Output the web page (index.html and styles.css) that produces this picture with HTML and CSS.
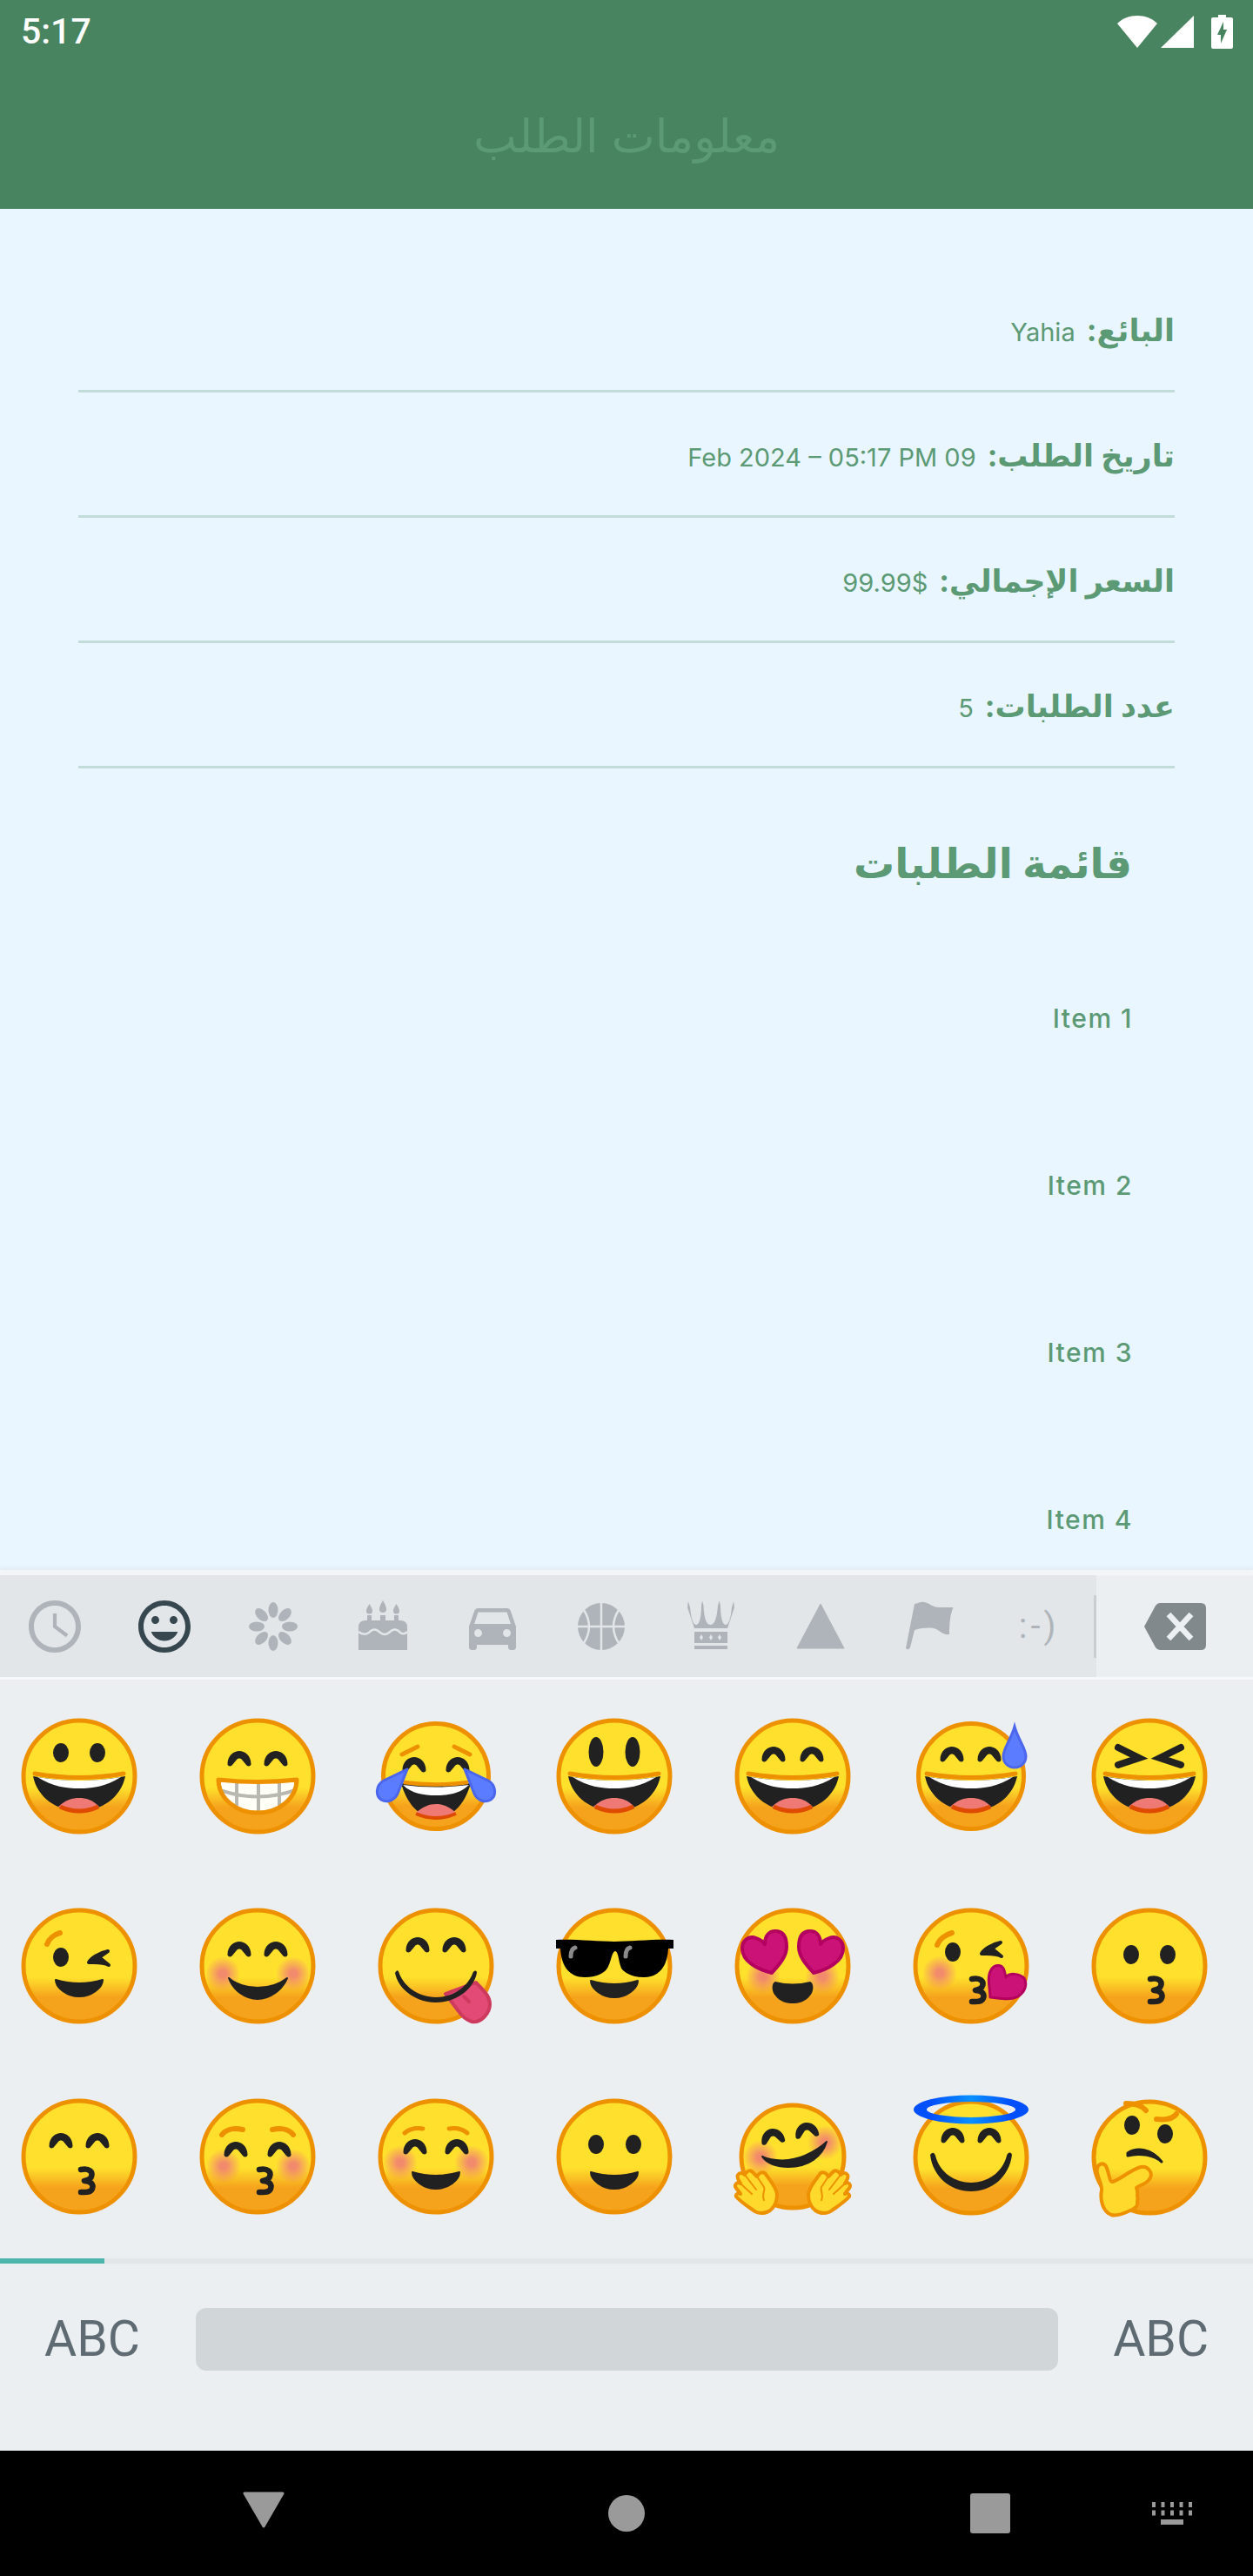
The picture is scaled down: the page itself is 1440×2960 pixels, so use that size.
FILE: index.html
```html
<!DOCTYPE html>
<html lang="ar">
<head>
    <meta charset="UTF-8">
    <meta name="viewport" content="width=device-width, initial-scale=1.0">
    <title>معلومات الطلب</title>
    <link rel="stylesheet" href="styles.css">
</head>
<body>
    <!-- shared emoji parts -->
    <svg class="defs" aria-hidden="true">
        <defs>
            <linearGradient id="skin" x1="0" y1="0" x2="0" y2="1">
                <stop offset="0.6" stop-color="#ffe12d"/>
                <stop offset="0.78" stop-color="#f5a31c"/>
            </linearGradient>
            <linearGradient id="halo" x1="0" y1="0" x2="1" y2="0">
                <stop offset="0.15" stop-color="#0050ff"/>
                <stop offset="0.5" stop-color="#0a90ff"/>
                <stop offset="0.85" stop-color="#0050ff"/>
            </linearGradient>
            <radialGradient id="blush">
                <stop offset="0.2" stop-color="#f28a6c"/>
                <stop offset="1" stop-color="#f28a6c" stop-opacity="0"/>
            </radialGradient>
            <clipPath id="teeth-clip">
                <path d="M-45 4Q0 9 45 4C45 25 25 42 0 42C-25 42-45 25-45 4Z"/>
            </clipPath>
            <circle id="face" r="64" fill="url(#skin)" stroke="#ee9100" stroke-width="5"/>
            <circle id="face-s" r="60.5" fill="url(#skin)" stroke="#ee9100" stroke-width="5"/>
            <ellipse id="eye" rx="9" ry="11" fill="#212121"/>
            <path id="eye-arc" fill="#212121" d="M-13.5 6C-13.5-4-6-9 0-9C6-9 13.5-4 13.5 6C13.5 9 9 9 8 7L3 1C1.5-1-1.5-1-3 1L-8 7C-9 9-13.5 9-13.5 6Z"/>
            <circle id="cheek" r="20" fill="url(#blush)"/>
            <g id="laugh">
                <path d="M-53 0Q0 10 53 0C48 25 25 40 0 40C-25 40-48 25-53 0Z" fill="#212121"/>
                <path d="M-48 1Q0 9 48 1C30 12 15 14 0 14C-15 14-30 12-48 1Z" fill="#fff"/>
                <path d="M-24 35C-15 27-8 25 0 25C8 25 15 27 23 35C14 40 7 41 0 41C-7 41-14 40-24 35Z" fill="#ef7a75"/>
                <path d="M-22 35Q0 45 22 35" fill="none" stroke="#dd4a00" stroke-width="5"/>
                <path d="M-51-3Q0 6 51-3" fill="none" stroke="#ee9100" stroke-width="5" stroke-linecap="round"/>
            </g>
            <path id="smile" fill="#212121" stroke="#212121" stroke-width="2" stroke-linejoin="round" d="M-27 16Q0 24 27 16C27 25 14 35 0 35C-14 35-27 25-27 16Z"/>
            <path id="kiss" fill="none" stroke="#212121" stroke-width="6.5" stroke-linecap="round" stroke-linejoin="round" d="M-2 15C8 13 12 18 10 23C9 27 4 27 2 28C9 28 13 32 11 37C9 42 3 41-2 41"/>
            <path id="wink" fill="#212121" stroke="#212121" stroke-width="4" stroke-linejoin="round" d="M33-17C22-15 13-8 11-4C17-4 27-5 34-1L23-10Z"/>
            <path id="heart-l" fill="#cb1277" stroke="#b3005f" stroke-width="4" stroke-linejoin="round" d="M-24 8C-40 4-58-5-58-20C-58-30-50-35-42-32C-37-30-33-27-32-25C-32-35-27-40-20-40C-11-40-7-33-7-22C-7-10-17 0-24 8Z"/>
            <path id="tear" fill="#5c7cff" stroke="#4a66ee" stroke-width="3" stroke-linejoin="round" d="M-33-8L-60 5C-69 10-70 22-63 27C-56 31-48 28-44 20Z"/>
            <g id="hand">
                <path fill="#ffd92c" stroke="#ee9100" stroke-width="4" stroke-linejoin="round" d="M-32 19C-27 26-18 36-18 44C-18 52-21 58-26 62C-32 66-40 66-45 62C-52 57-60 52-65 46C-66 43-62 41-60 43C-62 39-67 36-66 33C-65 30-62 29-60 31C-62 27-65 24-63 21C-61 18-57 19-55 21C-54 18-50 15-47 17C-45 19-43 21-41 23C-39 19-35 17-32 19Z"/>
                <path fill="none" stroke="#ee9100" stroke-width="2" stroke-linecap="round" d="M-55 21L-42 38M-60 31L-47 43M-41 23L-33 35C-31 38-36 44-33 50"/>
            </g>
        </defs>
    </svg>

    <div class="screen">
        <header class="app-head">
            <div class="status-bar">
                <span class="clock">5:17</span>
                <div class="status-icons">
                    <svg width="46" height="37" viewBox="0 0 46 37"><path fill="#fff" d="M23 37L0 9C6 3 14 0 23 0S40 3 46 9Z"/></svg>
                    <svg width="38" height="37" viewBox="0 0 38 37"><path fill="#fff" d="M38 0V37H0Z"/></svg>
                    <svg class="battery" width="25" height="39" viewBox="0 0 25 39"><path fill="#fff" d="M8 0H17V3H23Q25 3 25 5V37Q25 39 23 39H2Q0 39 0 37V5Q0 3 2 3H8Z"/><path fill="#47845f" d="M14 8L7 23H11V33L18 17H14Z"/></svg>
                </div>
            </div>
            <h1 class="app-title">معلومات الطلب</h1>
        </header>

        <main class="order" dir="rtl">
            <div class="info-row"><b>البائع:</b> Yahia</div>
            <div class="info-row"><b>تاريخ الطلب:</b> 09 Feb 2024 – 05:17 PM</div>
            <div class="info-row"><b>السعر الإجمالي:</b> 99.99$</div>
            <div class="info-row"><b>عدد الطلبات:</b> 5</div>
            <h2 class="list-title">قائمة الطلبات</h2>
            <div class="item">Item 1</div>
            <div class="item">Item 2</div>
            <div class="item">Item 3</div>
            <div class="item">Item 4</div>
        </main>

        <section class="keyboard">
            <div class="tabs">
                <div class="tab-list">
                    <div class="tab"><svg viewBox="0 0 24 24"><path d="M11.99 2C6.47 2 2 6.48 2 12s4.47 10 9.99 10C17.52 22 22 17.52 22 12S17.52 2 11.99 2zM12 20c-4.42 0-8-3.58-8-8s3.58-8 8-8 8 3.58 8 8-3.58 8-8 8z"/><path d="M12 7v5l4.7 3.5" fill="none" stroke="#aeb4b9" stroke-width="1.4"/></svg></div>
                    <div class="tab tab-on"><svg viewBox="0 0 24 24"><path d="M11.99 2C6.47 2 2 6.48 2 12s4.47 10 9.99 10C17.52 22 22 17.52 22 12S17.52 2 11.99 2zM12 20c-4.42 0-8-3.58-8-8s3.58-8 8-8 8 3.58 8 8-3.58 8-8 8zm3.5-9c.83 0 1.5-.67 1.5-1.5S16.33 8 15.5 8 14 8.67 14 9.5s.67 1.5 1.5 1.5zm-7 0c.83 0 1.5-.67 1.5-1.5S9.33 8 8.5 8 7 8.67 7 9.5 7.67 11 8.5 11zm3.5 6.5c2.33 0 4.31-1.46 5.11-3.5H6.89c.8 2.04 2.78 3.5 5.11 3.5z"/></svg></div>
                    <div class="tab"><svg viewBox="0 0 72 72">
                        <ellipse cx="36" cy="17" rx="5.5" ry="9"/>
                        <ellipse cx="36" cy="17" rx="5.5" ry="9" transform="rotate(45 36 36)"/>
                        <ellipse cx="36" cy="17" rx="5.5" ry="9" transform="rotate(90 36 36)"/>
                        <ellipse cx="36" cy="17" rx="5.5" ry="9" transform="rotate(135 36 36)"/>
                        <ellipse cx="36" cy="17" rx="5.5" ry="9" transform="rotate(180 36 36)"/>
                        <ellipse cx="36" cy="17" rx="5.5" ry="9" transform="rotate(225 36 36)"/>
                        <ellipse cx="36" cy="17" rx="5.5" ry="9" transform="rotate(270 36 36)"/>
                        <ellipse cx="36" cy="17" rx="5.5" ry="9" transform="rotate(315 36 36)"/>
                    </svg></div>
                    <div class="tab"><svg viewBox="0 0 72 72">
                        <path d="M20.5 10C23 14 24 16 24 18A3.5 3.5 0 0 1 17 18C17 16 18 14 20.5 10ZM36 6C39 11 40 14 40 16A4 4 0 0 1 32 16C32 14 33 11 36 6ZM51.500 10C54 14 55 16 55 18A3.500 3.500 0 0 1 48 18C48 16 49 14 51.500 10Z"/>
                        <path d="M18 23H23V29H33V23H39V29H49V23H54V29H56Q64 29 64 37V63H8V37Q8 29 16 29H18Z"/>
                        <path d="M8 42Q14 47 20 43Q26 36 33 43Q38 47 43 43Q50 36 56 43Q60 46 64 42" fill="none" stroke="#e2e6e9" stroke-width="2.500"/>
                    </svg></div>
                    <div class="tab"><svg viewBox="0 0 24 24"><path d="M18.92 6.010C18.72 5.420 18.160 5 17.500 5h-11c-.66 0-1.210.42-1.420 1.010L3 12v8c0 .55.45 1 1 1h1c.55 0 1-.45 1-1v-1h12v1c0 .55.45 1 1 1h1c.55 0 1-.45 1-1v-8l-2.080-5.990zM6.500 16c-.83 0-1.500-.67-1.500-1.500S5.670 13 6.500 13s1.500.67 1.500 1.500S7.330 16 6.500 16zm11 0c-.83 0-1.500-.67-1.500-1.500s.67-1.500 1.500-1.500 1.500.67 1.500 1.500-.67 1.500-1.500 1.500zM5 11l1.500-4.500h11L19 11H5z"/></svg></div>
                    <div class="tab"><svg viewBox="0 0 72 72">
                        <circle cx="36" cy="36" r="27"/>
                        <path d="M36 9V63M9 36H63M16 17Q28 36 16 55M56 17Q44 36 56 55" fill="none" stroke="#e2e6e9" stroke-width="2.500"/>
                    </svg></div>
                    <div class="tab"><svg viewBox="0 0 72 72">
                        <path d="M9 14L10 7L12 14C13 24 15 34 19 34C23 34 25 24 25 12L26 6L27.500 12C28 24 30 34 35.500 34C41 34 43 24 44 12L45.500 6L47 12C47 24 49 34 53 34C57 34 59 24 60 14L62 7L63 14L55 38H17Z"/>
                        <path fill-rule="evenodd" d="M17 42H55V55H17ZM25 45L23 48.500L25 52L27 48.500ZM36 45L34 48.500L36 52L38 48.500ZM46 45L44 48.500L46 52L48 48.500Z"/>
                        <rect x="17" y="58" width="38" height="4"/>
                    </svg></div>
                    <div class="tab"><svg viewBox="0 0 72 72"><path d="M36 10L63 61H9Z" stroke="#aeb4b9" stroke-width="1" stroke-linejoin="round"/></svg></div>
                    <div class="tab"><svg viewBox="0 0 72 72"><path d="M19 10C23 10 26 7 30 8C36 9 40 14 47 14H63.500C60 22 59 32 59 45C53 46 49 42 44 39C38 37 30 37 19 40L14 60Q12 64 9 61Z"/></svg></div>
                    <div class="tab tab-text">:-)</div>
                </div>
                <div class="tab-divider"></div>
                <div class="tab-delete">
                    <svg viewBox="0 0 72 72" width="72" height="72"><path fill="#82898d" d="M1 36L14 12Q16 9 19 9H66Q72 9 72 15V57Q72 63 66 63H19Q16 63 14 60Z"/><path d="M29 22L55 50M55 22L29 50" stroke="#ecf0f2" stroke-width="6.500" fill="none"/></svg>
                </div>
            </div>

            <div class="emoji-grid">
                <svg class="emoji" viewBox="-75 -75 150 150"><use href="#face"/><use href="#eye" x="-21" y="-27"/><use href="#eye" x="21" y="-27"/><use href="#laugh"/></svg>
                <svg class="emoji" viewBox="-75 -75 150 150"><use href="#face"/><use href="#eye-arc" x="-21" y="-20"/><use href="#eye-arc" x="21" y="-20"/>
                    <path d="M-45 4Q0 9 45 4C45 25 25 42 0 42C-25 42-45 25-45 4Z" fill="#fffff8"/>
                    <g clip-path="url(#teeth-clip)" fill="none" stroke="#b8b8b0" stroke-width="4"><path d="M-24 0V45M1 0V45M25 0V45M-46 15Q0 32 46 15"/></g>
                    <path d="M-45 4Q0 9 45 4C45 25 25 42 0 42C-25 42-45 25-45 4Z" fill="none" stroke="#ee9100" stroke-width="5" stroke-linejoin="round"/>
                </svg>
                <svg class="emoji" viewBox="-75 -75 150 150"><use href="#face-s"/>
                    <path d="M-39-25L-21-34M39-25L21-34" stroke="#ee9100" stroke-width="5" stroke-linecap="round" fill="none"/>
                    <use href="#eye-arc" x="-25" y="-13"/><use href="#eye-arc" x="25" y="-13"/>
                    <path d="M-40 8Q0 14 40 8C34 30 20 48 0 48C-20 48-34 30-40 8Z" fill="#212121"/>
                    <path d="M-38 10Q0 15 38 10C28 20 14 22 0 22C-14 22-28 20-38 10Z" fill="#fff"/>
                    <path d="M-23 42C-15 35-8 32 0 32C8 32 15 35 23 42C14 47 7 48 0 48C-7 48-14 47-23 42Z" fill="#ef7a75"/>
                    <path d="M-23 43Q0 53 23 43" fill="none" stroke="#dd4a00" stroke-width="4"/>
                    <path d="M-37 7Q0 12 37 7" fill="none" stroke="#ee9100" stroke-width="4.500"/>
                    <use href="#tear"/><use href="#tear" transform="scale(-1 1)"/>
                </svg>
                <svg class="emoji" viewBox="-75 -75 150 150"><use href="#face"/><ellipse cx="-21" cy="-28" rx="8.500" ry="17" fill="#212121"/><ellipse cx="21" cy="-28" rx="8.500" ry="17" fill="#212121"/><use href="#laugh"/></svg>
                <svg class="emoji" viewBox="-75 -75 150 150"><use href="#face"/><use href="#eye-arc" x="-22" y="-25"/><use href="#eye-arc" x="22" y="-25"/><use href="#laugh"/></svg>
                <svg class="emoji" viewBox="-75 -75 150 150"><use href="#face-s"/><use href="#eye-arc" x="-22" y="-25"/><use href="#eye-arc" x="21" y="-25"/><use href="#laugh"/>
                    <path d="M50-57C54-42 63-32 63-23C63-15 57-10 50-10C43-10 37-15 37-23C37-32 46-42 50-57Z" fill="#5c7cff" stroke="#4c66ee" stroke-width="3"/>
                </svg>
                <svg class="emoji" viewBox="-75 -75 150 150"><use href="#face"/><path d="M-36-33L-12-21L-36-13M36-33L12-21L36-13" fill="none" stroke="#212121" stroke-width="8" stroke-linecap="round"/><use href="#laugh"/></svg>

                <svg class="emoji" viewBox="-75 -75 150 150"><use href="#face"/><path d="M-37-25C-35-31-29-36-22-38" fill="none" stroke="#ee9100" stroke-width="6" stroke-linecap="round"/><use href="#eye" x="-21" y="-10"/><use href="#wink"/><use href="#smile"/></svg>
                <svg class="emoji" viewBox="-75 -75 150 150"><use href="#face"/><use href="#cheek" x="-40" y="9"/><use href="#cheek" x="41" y="9"/><use href="#eye-arc" x="-21" y="-19"/><use href="#eye-arc" x="21" y="-19"/>
                    <path d="M-33 14C-25 21-12 25 0 25C12 25 25 21 34 14C28 28 14 38 0 38C-14 38-28 28-33 14Z" fill="#212121" stroke="#212121" stroke-width="2" stroke-linejoin="round"/>
                </svg>
                <svg class="emoji" viewBox="-75 -75 150 150"><use href="#face"/><use href="#eye-arc" x="-21" y="-24"/><use href="#eye-arc" x="21" y="-24"/>
                    <path d="M46 19C54 28 62 34 62 44C62 54 52 66 41 64C35 62 30 58 26 52L11 32Z" fill="#e34b76" stroke="#cd3a5e" stroke-width="4" stroke-linejoin="round"/>
                    <path d="M32 35L38 41" stroke="#cd3a5e" stroke-width="4" stroke-linecap="round"/>
                    <path d="M-47 8C-44 3-43 6-42 9C-36 24-20 36 0 36C20 36 36 24 42 9C43 5 47 4 47 8C43 28 22 42 0 42C-22 42-43 28-47 8Z" fill="#212121"/>
                </svg>
                <svg class="emoji" viewBox="-75 -75 150 150"><use href="#face"/><use href="#smile" y="1"/>
                    <path d="M-67-30C-45-31-20-28 0-28C20-28 45-31 68-30V-20H62C61 0 52 13 34 13C18 13 11 6 9 4C5-2 5-17 1-17C-3-17-4-2-9 4C-12 8-20 13-34 13C-52 13-61 0-62-20H-67Z" fill="#000"/>
                    <path d="M-45-21C-49-20-50-16-50-11" fill="none" stroke="#8a8a8a" stroke-width="5" stroke-linecap="round"/>
                    <path d="M18-21C14-20 13-16 13-11" fill="none" stroke="#8a8a8a" stroke-width="5" stroke-linecap="round"/>
                </svg>
                <svg class="emoji" viewBox="-75 -75 150 150"><use href="#face"/><use href="#cheek" x="-34" y="12"/><use href="#cheek" x="34" y="12"/>
                    <path d="M-20 18Q0 23 20 18C25 20 24 30 20 34C14 42 6 43 0 43C-6 43-14 42-20 34C-24 30-25 20-20 18Z" fill="#212121"/>
                    <use href="#heart-l"/><use href="#heart-l" transform="scale(-1 1)"/>
                </svg>
                <svg class="emoji" viewBox="-75 -75 150 150"><use href="#face"/><use href="#cheek" x="-36" y="8"/><path d="M-39-24C-37-30-30-36-22-38" fill="none" stroke="#ee9100" stroke-width="6" stroke-linecap="round"/><use href="#eye" x="-21" y="-16"/><use href="#wink" y="-10" x="1"/><use href="#kiss" x="3"/>
                    <path d="M22 36C22 25 17 12 24 3C28-2 36-2 38 5C40 11 39 12 40 13C44 8 55 8 61 14C65 21 62 30 54 35C45 40 33 37 22 36Z" fill="#cb1277" stroke="#b3005f" stroke-width="3" stroke-linejoin="round"/>
                </svg>
                <svg class="emoji" viewBox="-75 -75 150 150"><use href="#face"/><use href="#eye" x="-21" y="-13"/><use href="#eye" x="21" y="-13"/><use href="#kiss" x="3"/></svg>

                <svg class="emoji" viewBox="-75 -75 150 150"><use href="#face"/><use href="#eye-arc" x="-21" y="-18"/><use href="#eye-arc" x="21" y="-18"/><use href="#kiss" x="4"/></svg>
                <svg class="emoji" viewBox="-75 -75 150 150"><use href="#face"/><use href="#cheek" x="-39" y="11"/><use href="#cheek" x="41" y="11"/>
                    <path d="M-41-25C-36-32-26-33-17-31M41-25C36-32 26-33 17-31" fill="none" stroke="#ee9100" stroke-width="6" stroke-linecap="round"/>
                    <use href="#eye-arc" x="-25" y="-8"/><use href="#eye-arc" x="25" y="-8"/><use href="#kiss" x="4"/>
                </svg>
                <svg class="emoji" viewBox="-75 -75 150 150"><use href="#face"/><use href="#cheek" x="-41" y="7"/><use href="#cheek" x="41" y="7"/>
                    <path d="M-36-27C-30-32-22-33-15-32M36-27C30-32 22-33 15-32" fill="none" stroke="#ee9100" stroke-width="5" stroke-linecap="round"/>
                    <use href="#eye-arc" x="-24" y="-11"/><use href="#eye-arc" x="24" y="-11"/><use href="#smile" y="2"/>
                </svg>
                <svg class="emoji" viewBox="-75 -75 150 150"><use href="#face"/><use href="#eye" x="-21" y="-14"/><use href="#eye" x="22" y="-14"/><use href="#smile" y="2"/></svg>
                <svg class="emoji" viewBox="-75 -75 150 150"><circle r="59" fill="url(#skin)" stroke="#ee9100" stroke-width="5"/><use href="#cheek" x="-37" y="1"/><use href="#cheek" x="37" y="-16"/>
                    <use href="#eye-arc" x="-23" y="-23" transform="rotate(-8 -23 -23)"/><use href="#eye-arc" x="16" y="-30" transform="rotate(-8 16 -30)"/>
                    <path d="M-35 0C-22 6-2 6 14-1C25-6 34-12 39-17C34 0 18 12-5 12C-18 12-30 8-35 0Z" fill="#212121" stroke="#212121" stroke-width="2" stroke-linejoin="round"/>
                    <use href="#hand"/><use href="#hand" transform="scale(-1 1)"/>
                </svg>
                <svg class="emoji" viewBox="-75 -75 150 150"><g transform="translate(0 1)"><use href="#face"/><use href="#eye-arc" x="-21" y="-25"/><use href="#eye-arc" x="21" y="-25"/>
                    <path d="M-47-3C-44-7-42-5-41-2C-36 18-18 29 0 29C18 29 36 18 41-2C42-6 46-7 47-3C44 22 24 39 0 39C-24 39-44 22-47-3Z" fill="#212121"/>
                    <path fill="url(#halo)" fill-rule="evenodd" d="M-66-55A66 16.500 0 0 1 66-55A66 16.500 0 0 1-66-55ZM-51-55A51 9 0 0 0 51-55A51 9 0 0 0-51-55Z"/></g>
                </svg>
                <svg class="emoji" viewBox="-75 -75 150 150"><g transform="translate(0 1)"><use href="#face"/>
                    <path d="M-27-62C-18-62-9-60-4-54M8-44C17-43 27-44 31-50" fill="none" stroke="#ee9100" stroke-width="6" stroke-linecap="round"/>
                    <use href="#eye" x="-20" y="-37"/><use href="#eye" x="18" y="-27"/>
                    <path d="M-25-5C-14-12 2-10 14 5C6-2-10-6-25-2Z" fill="#212121" stroke="#212121" stroke-width="3" stroke-linejoin="round"/>
                    <path d="M-60 13C-60 8-53 5-50 10C-47 15-46 28-43 28C-37 28-22 14-10 11C-2 9 5 18 0 25C-4 31-12 32-15 35C-13 40-14 42-14 44C-13 47-14 50-14 52C-13 56-16 58-20 60C-28 64-38 68-44 66C-54 62-57 48-55 38C-54 30-62 20-60 13Z" fill="#ffd92c" stroke="#ee9100" stroke-width="4" stroke-linejoin="round"/></g>
                </svg>
            </div>

            <div class="pager"><div class="pager-on"></div></div>

            <div class="kb-bottom">
                <span class="abc">ABC</span>
                <div class="space-bar"></div>
                <span class="abc">ABC</span>
            </div>
        </section>

        <nav class="nav-bar">
            <div class="nav-cell"><svg class="nav-back" width="48" height="48" viewBox="0 0 48 48"><path d="M2 2H46L24 40Z" stroke="#9a9a9a" stroke-width="3" stroke-linejoin="round"/></svg></div>
            <div class="nav-cell"><div class="nav-home"></div></div>
            <div class="nav-cell"><div class="nav-recent"></div></div>
            <svg class="nav-kbd" width="46" height="26" viewBox="0 0 46 26">
                <path d="M0 0h4v6H0zM10.500 0h4v6h-4zM21 0h4v6h-4zM31.500 0h4v6h-4zM42 0h4v6h-4zM0 9.500h4v6H0zM10.500 9.500h4v6h-4zM21 9.500h4v6h-4zM31.500 9.500h4v6h-4zM42 9.500h4v6h-4zM10 20h26v6H10z"/>
            </svg>
        </nav>
    </div>
</body>
</html>
```

FILE: styles.css
```css
* {
    box-sizing: border-box;
}
body {
    margin: 0;
    background-color: #000;
    font-family: Inter, "DejaVu Sans", sans-serif;
    color: #5b9a74;
}
.defs {
    display: block;
    width: 0;
    height: 0;
}
.screen {
    width: 1440px;
    height: 2960px;
    display: flex;
    flex-direction: column;
    overflow: hidden;
}

/* header */
.app-head {
    height: 240px;
    flex: none;
    background-color: #47845f;
}
.status-bar {
    height: 70px;
    display: flex;
    justify-content: space-between;
    align-items: center;
    padding: 2px 23px 0 24px;
}
.clock {
    font-family: Roboto, sans-serif;
    font-weight: 500;
    font-size: 41px;
    color: #fff;
}
.status-icons {
    display: flex;
    align-items: center;
    gap: 4px;
}
.battery {
    margin-left: 16px;
}
.app-title {
    margin: 46px 0 0;
    text-align: center;
    font-weight: normal;
    font-size: 53px;
    line-height: 80px;
    color: #5b9a74;
}

/* order info */
.order {
    height: 1564px;
    flex: none;
    overflow: hidden;
    background-color: #e9f5ff;
    padding-top: 67px;
}
.info-row {
    height: 144px;
    margin: 0 90px;
    display: flex;
    align-items: baseline;
    gap: 13px;
    padding-top: 51px;
    border-bottom: 3px solid #c2ddd9;
    font-size: 29px;
}
.info-row b {
    font-size: 35px;
}
.list-title {
    margin: 0;
    padding: 80px 139px 0 0;
    height: 269px;
    font-size: 47px;
    font-weight: bold;
}
.item {
    height: 192px;
    padding-right: 138px;
    font-size: 30px;
    font-weight: 500;
    letter-spacing: 1.5px;
    line-height: 36px;
}

/* keyboard */
.keyboard {
    height: 1012px;
    flex: none;
    background-color: #ebeff2;
    box-shadow: 0 -3px 4px rgba(0, 0, 0, 0.04);
    position: relative;
}
.tabs {
    height: 126px;
    display: flex;
    border-top: 6px solid #f3f5f6;
    border-bottom: 3px solid #f6f8f9;
}
.tab-list {
    width: 1260px;
    display: flex;
    background-color: #e2e6e9;
}
.tab {
    width: 125.7px;
    display: flex;
    justify-content: center;
    align-items: center;
}
.tab svg {
    width: 72px;
    height: 72px;
    fill: #aeb4b9;
}
.tab-on svg {
    fill: #37474f;
}
.tab-text {
    font-family: Roboto, sans-serif;
    font-size: 40px;
    letter-spacing: 4px;
    color: #aeb4b9;
}
.tab-divider {
    width: 3px;
    height: 72px;
    align-self: center;
    margin-left: -3px;
    background-color: #c8ced2;
}
.tab-delete {
    flex: 1;
    display: flex;
    justify-content: center;
    align-items: center;
}
.emoji-grid {
    display: grid;
    grid-template-columns: repeat(7, 205px);
    grid-auto-rows: 218.3px;
    justify-items: center;
    align-items: center;
    margin-left: -12px;
    padding-top: 2px;
}
.emoji {
    width: 150px;
    height: 150px;
    overflow: visible;
}
.pager {
    height: 6px;
    margin-top: 8px;
    background-color: #e2e6e9;
}
.pager-on {
    width: 120px;
    height: 100%;
    background-color: #4db6ac;
}
.kb-bottom {
    display: flex;
    align-items: center;
    justify-content: space-between;
    padding: 51px 51px 0 51px;
}
.abc {
    font-family: Roboto, sans-serif;
    font-size: 57px;
    color: #5f6b72;
}
.space-bar {
    width: 991px;
    height: 72px;
    border-radius: 12px;
    background-color: #d1d6d9;
}

/* android nav */
.nav-bar {
    height: 144px;
    flex: none;
    display: flex;
    align-items: center;
    padding-left: 94px;
    background-color: #000;
}
.nav-cell {
    width: 417.5px;
    display: flex;
    justify-content: center;
}
.nav-back {
    fill: #9a9a9a;
    margin-top: -2px;
}
.nav-home {
    width: 42px;
    height: 42px;
    border-radius: 50%;
    background-color: #9a9a9a;
}
.nav-recent {
    width: 46px;
    height: 46px;
    border-radius: 3px;
    background-color: #9a9a9a;
}
.nav-kbd {
    fill: #9a9a9a;
    margin-left: -23px;
}
```
